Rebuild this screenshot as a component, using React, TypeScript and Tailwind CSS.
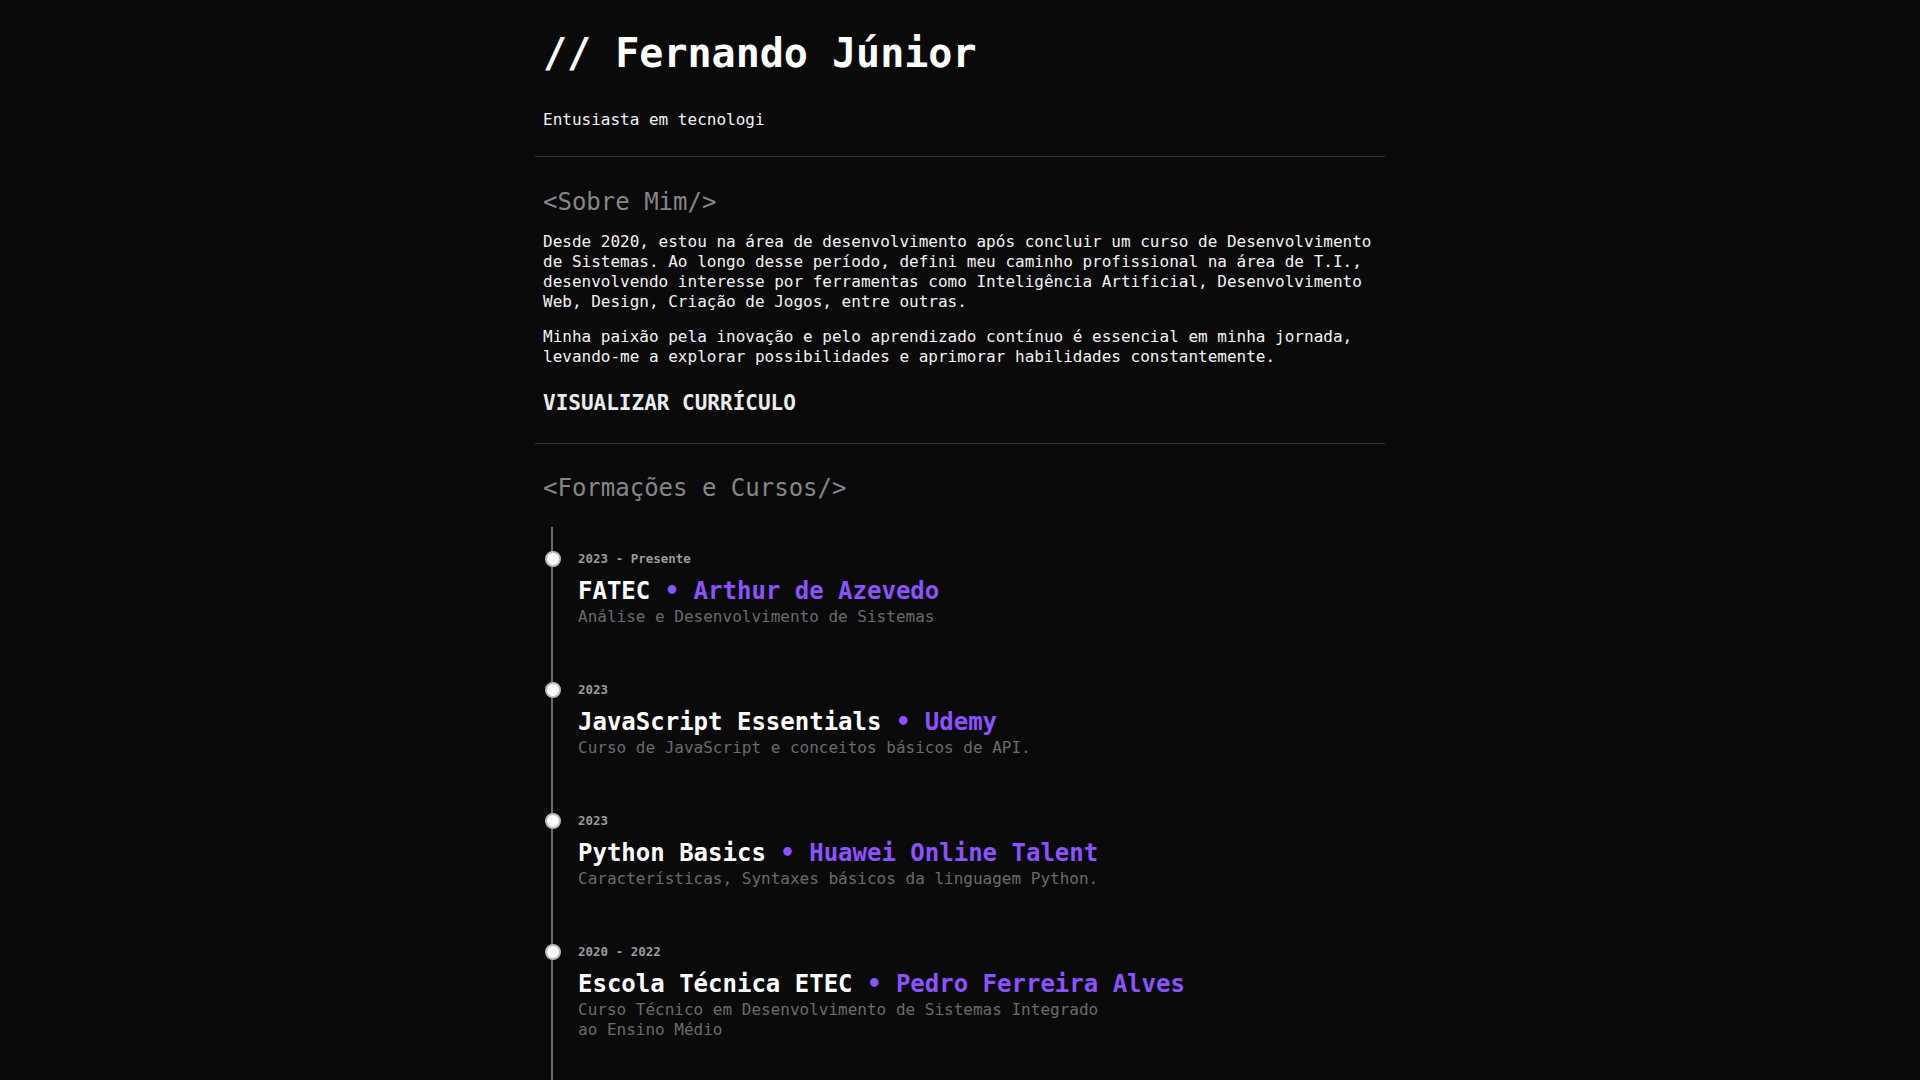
import React from "react";

type Course = {
  period: string;
  name: string;
  place: string;
  description: string;
};

const courses: Course[] = [
  {
    period: "2023 - Presente",
    name: "FATEC",
    place: "Arthur de Azevedo",
    description: "Análise e Desenvolvimento de Sistemas",
  },
  {
    period: "2023",
    name: "JavaScript Essentials",
    place: "Udemy",
    description: "Curso de JavaScript e conceitos básicos de API.",
  },
  {
    period: "2023",
    name: "Python Basics",
    place: "Huawei Online Talent",
    description: "Características, Syntaxes básicos da linguagem Python.",
  },
  {
    period: "2020 - 2022",
    name: "Escola Técnica ETEC",
    place: "Pedro Ferreira Alves",
    description: "Curso Técnico em Desenvolvimento de Sistemas Integrado ao Ensino Médio",
  },
];

function TimelineItem({ course }: { course: Course }) {
  return (
    <li className="relative pl-[25px]">
      <span className="absolute -left-[8px] top-0 h-4 w-4 rounded-full border-2 border-[#bcbcbc] bg-white" />
      <p className="text-[12.5px] font-bold leading-4 text-[#9a9a9a]">{course.period}</p>
      <h3 className="mt-2 text-[24px] font-bold leading-8 text-white">
        {course.name} <span className="text-[#8c52ff]">• {course.place}</span>
      </h3>
      <p className="max-w-[530px] text-[16px] leading-5 text-[#6b6b6b]">{course.description}</p>
    </li>
  );
}

export default function App() {
  return (
    <div
      className="h-screen overflow-hidden bg-[#0a0a0a] text-[#f2f2f2]"
      style={{ fontFamily: '"DejaVu Sans Mono", "Liberation Mono", monospace' }}
    >
      <div className="mx-auto w-[850px]">
        <header className="px-2 pt-[29px]">
          <h1 className="text-[40px] font-bold leading-[48px] text-white">// Fernando Júnior</h1>
          <p className="mt-[33px] text-[16px] leading-5">Entusiasta em tecnologi</p>
        </header>

        <hr className="mt-[26px] border-[#333333]" />

        <section className="px-2">
          <h2 className="mt-[29px] text-[24px] leading-8 text-[#868686]">&lt;Sobre Mim/&gt;</h2>
          <p className="mt-[14px] text-[16px] leading-5">
            Desde 2020, estou na área de desenvolvimento após concluir um curso de Desenvolvimento de Sistemas. Ao
            longo desse período, defini meu caminho profissional na área de T.I., desenvolvendo interesse por
            ferramentas como Inteligência Artificial, Desenvolvimento Web, Design, Criação de Jogos, entre outras.
          </p>
          <p className="mt-[15px] text-[16px] leading-5">
            Minha paixão pela inovação e pelo aprendizado contínuo é essencial em minha jornada, levando-me a explorar
            possibilidades e aprimorar habilidades constantemente.
          </p>
          <a href="#" className="mt-[22px] block text-[21px] font-bold leading-7 text-[#ececec]">
            VISUALIZAR CURRÍCULO
          </a>
        </section>

        <hr className="mt-[26px] border-[#333333]" />

        <section className="px-2">
          <h2 className="mt-[28px] text-[24px] leading-8 text-[#868686]">&lt;Formações e Cursos/&gt;</h2>
        </section>

        <ol className="mt-[23px] ml-4 space-y-[55px] border-l-2 border-[#6a6a6a] pt-6 pb-40">
          {courses.map((course) => (
            <TimelineItem key={course.name} course={course} />
          ))}
        </ol>
      </div>
    </div>
  );
}
